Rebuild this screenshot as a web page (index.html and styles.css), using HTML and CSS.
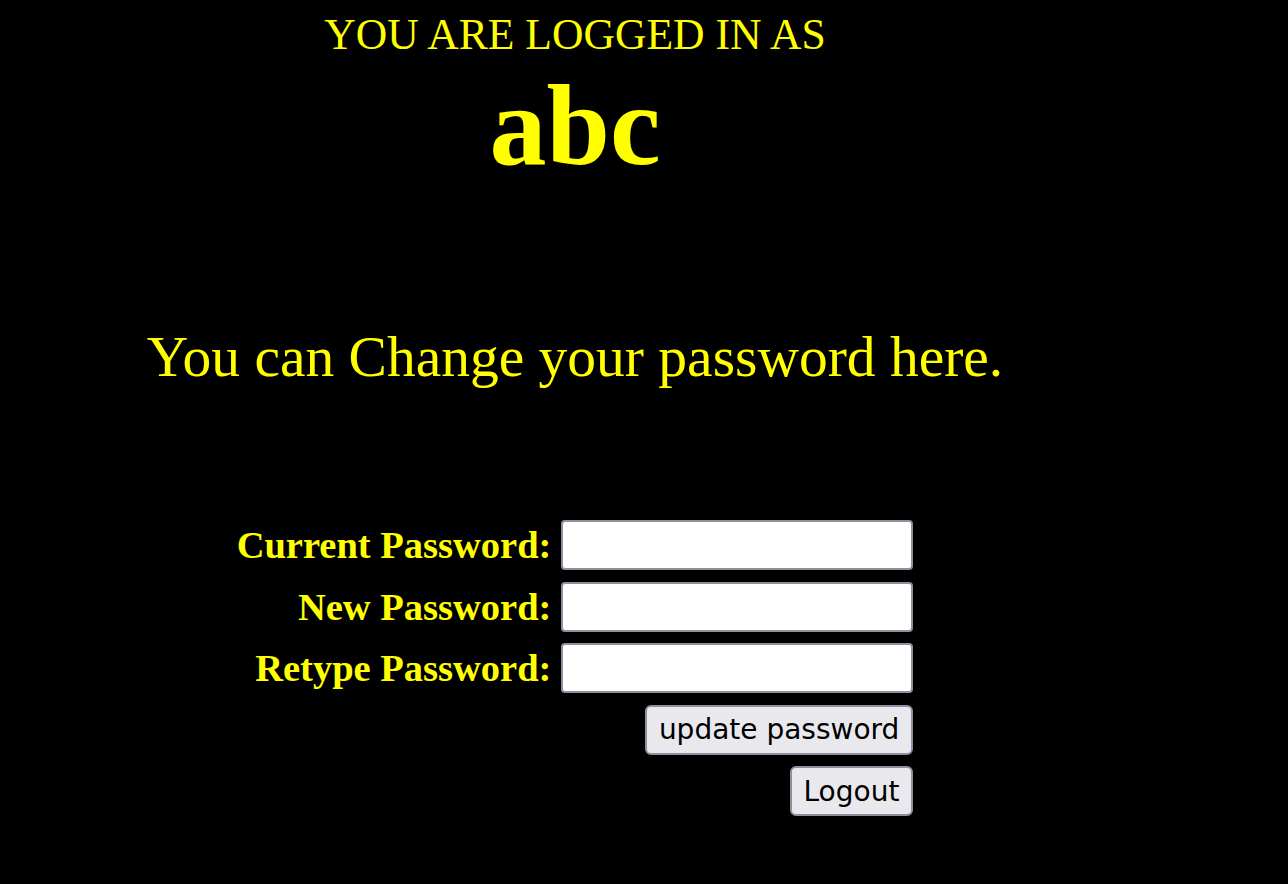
FILE: index.html
```html
<!DOCTYPE html>
<html>
<head>
<meta charset="utf-8">
<title>Change password</title>
<link rel="stylesheet" href="styles.css">
</head>
<body>
<div class="page">
  <div class="who">YOU ARE LOGGED IN AS</div>
  <div class="name">abc</div>
  <div class="change">You can Change your password here.</div>
  <form class="form">
    <label class="label" for="cur">Current Password:</label>
    <input class="field" id="cur" type="password">
    <label class="label" for="new">New Password:</label>
    <input class="field" id="new" type="password">
    <label class="label" for="re">Retype Password:</label>
    <input class="field" id="re" type="password">
    <button class="btn" type="button">update password</button>
    <button class="btn" type="button">Logout</button>
  </form>
</div>
</body>
</html>
```
FILE: styles.css
```css
html, body {
  background: #000;
}
body {
  margin: 0;
  font-family: "Liberation Serif", "Times New Roman", serif;
  color: #ffff00;
}
.page {
  width: 1134px;
  margin-left: 8px;
  padding-top: 9px;
  text-align: center;
}
.who {
  font-size: 43.6px;
  line-height: 50px;
}
.name {
  margin-top: 7px;
  font-size: 114px;
  font-weight: bold;
  line-height: 120px;
}
.change {
  margin-top: 139px;
  font-size: 57.5px;
  line-height: 64px;
}
.form {
  margin-top: 131px;
  display: grid;
  grid-template-columns: auto 352px;
  grid-auto-rows: 50px;
  column-gap: 10px;
  row-gap: 11.5px;
  justify-content: center;
  align-items: center;
}
.label {
  grid-column: 1;
  text-align: right;
  font-size: 38.5px;
  font-weight: bold;
  line-height: 50px;
}
.field {
  grid-column: 2;
  box-sizing: border-box;
  width: 352px;
  height: 50px;
  margin: 0;
  background: #fff;
  border: 2px solid #8f8f9d;
  border-radius: 4px;
}
.btn {
  grid-column: 2;
  justify-self: end;
  box-sizing: border-box;
  height: 50px;
  margin: 0;
  padding: 0 12px;
  font-family: "DejaVu Sans", Verdana, sans-serif;
  font-size: 28px;
  color: #000;
  background: #e9e9ed;
  border: 2px solid #8f8f9d;
  border-radius: 6px;
}
```
